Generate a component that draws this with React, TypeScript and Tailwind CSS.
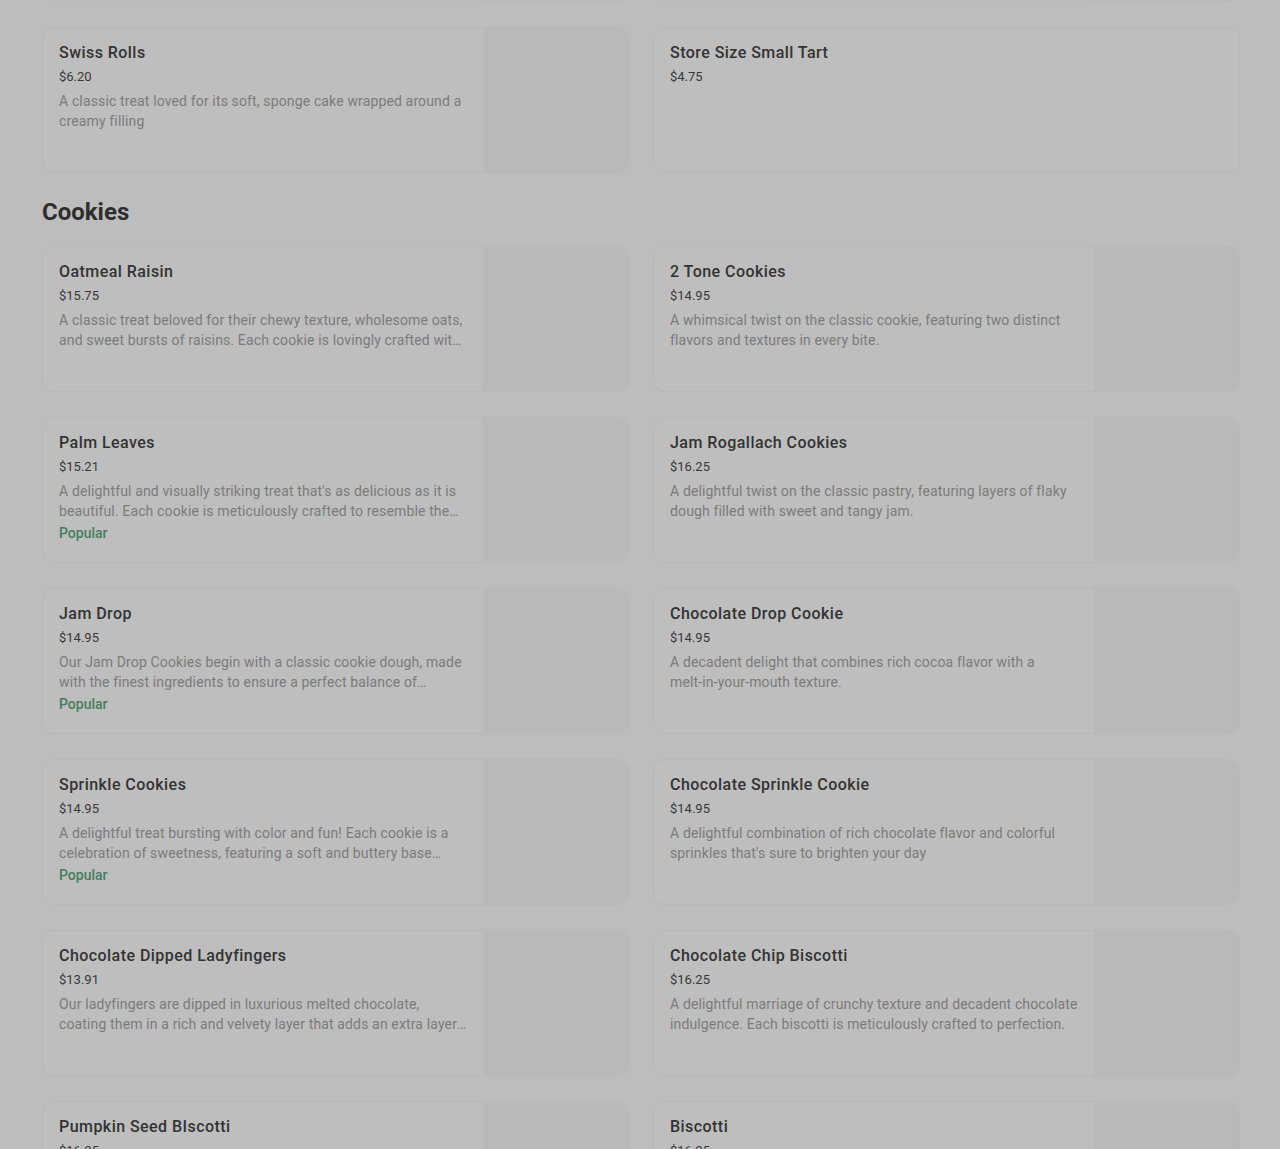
import React from 'react';

interface Item {
    name: string;
    price: string;
    description?: string;
    popular?: boolean;
    image?: boolean;
}

const previousRow: Item[] = [
    { name: 'Cannoli', price: '$5.95', description: 'Crisp pastry shells filled with sweet ricotta cream', image: true },
    { name: 'Fruit Tart', price: '$6.50', description: 'Buttery crust topped with custard and fresh fruit', image: true },
];

const pastries: Item[] = [
    { name: 'Swiss Rolls', price: '$6.20', description: 'A classic treat loved for its soft, sponge cake wrapped around a creamy filling', image: true },
    { name: 'Store Size Small Tart', price: '$4.75' },
];

const cookies: Item[] = [
    {
        name: 'Oatmeal Raisin',
        price: '$15.75',
        description: 'A classic treat beloved for their chewy texture, wholesome oats, and sweet bursts of raisins. Each cookie is lovingly crafted with care and baked to golden perfection.',
        image: true,
    },
    {
        name: '2 Tone Cookies',
        price: '$14.95',
        description: 'A whimsical twist on the classic cookie, featuring two distinct flavors and textures in every bite.',
        image: true,
    },
    {
        name: 'Palm Leaves',
        price: '$15.21',
        description: "A delightful and visually striking treat that's as delicious as it is beautiful. Each cookie is meticulously crafted to resemble the delicate leaves of a palm.",
        popular: true,
        image: true,
    },
    {
        name: 'Jam Rogallach Cookies',
        price: '$16.25',
        description: 'A delightful twist on the classic pastry, featuring layers of flaky dough filled with sweet and tangy jam.',
        image: true,
    },
    {
        name: 'Jam Drop',
        price: '$14.95',
        description: 'Our Jam Drop Cookies begin with a classic cookie dough, made with the finest ingredients to ensure a perfect balance of sweetness and texture.',
        popular: true,
        image: true,
    },
    {
        name: 'Chocolate Drop Cookie',
        price: '$14.95',
        description: 'A decadent delight that combines rich cocoa flavor with a melt‑in‑your‑mouth texture.',
        image: true,
    },
    {
        name: 'Sprinkle Cookies',
        price: '$14.95',
        description: 'A delightful treat bursting with color and fun! Each cookie is a celebration of sweetness, featuring a soft and buttery base topped with sprinkles.',
        popular: true,
        image: true,
    },
    {
        name: 'Chocolate Sprinkle Cookie',
        price: '$14.95',
        description: "A delightful combination of rich chocolate flavor and colorful sprinkles that's sure to brighten your day",
        image: true,
    },
    {
        name: 'Chocolate Dipped Ladyfingers',
        price: '$13.91',
        description: 'Our ladyfingers are dipped in luxurious melted chocolate, coating them in a rich and velvety layer that adds an extra layer of indulgence.',
        image: true,
    },
    {
        name: 'Chocolate Chip Biscotti',
        price: '$16.25',
        description: 'A delightful marriage of crunchy texture and decadent chocolate indulgence. Each biscotti is meticulously crafted to perfection.',
        image: true,
    },
    {
        name: 'Pumpkin Seed BIscotti',
        price: '$16.25',
        description: 'Crunchy twice-baked biscotti studded with toasted pumpkin seeds.',
        image: true,
    },
    {
        name: 'Biscotti',
        price: '$16.25',
        description: 'Traditional almond biscotti, perfect with coffee or tea.',
        image: true,
    },
];

function ItemCard({ item }: { item: Item }) {
    return (
        <div className="flex h-[146px] rounded-xl border border-[#b8b8b8] bg-[#bebebe] overflow-hidden">
            <div className="flex-1 min-w-0 pl-4 pr-4 pt-[15px]">
                <div className="text-[16px] leading-5 font-medium tracking-[0.45px] text-[#333333]">{item.name}</div>
                <div className="mt-1 text-[13px] leading-5 text-[#383838]">{item.price}</div>
                {item.description && (
                    <div className="mt-1 text-[14px] leading-5 tracking-[0.14px] text-[#7b7b7b] line-clamp-2 max-h-10 overflow-hidden">
                        {item.description}
                    </div>
                )}
                {item.popular && (
                    <div className="mt-[2px] text-[14px] leading-5 font-medium text-[#477c5e]">Popular</div>
                )}
            </div>
            {item.image && <div className="w-[145px] shrink-0 bg-[#b9b9b9]" />}
        </div>
    );
}

export default function App() {
    return (
        <div className="min-h-screen bg-[#bdbdbd] overflow-hidden" style={{ fontFamily: 'Roboto, "Liberation Sans", sans-serif' }}>
            <div className="pl-[42px] pr-[40px] -mt-[144px]">
                <div className="grid grid-cols-2 gap-x-6 gap-y-[25px]">
                    {[...previousRow, ...pastries].map((item) => (
                        <ItemCard key={item.name} item={item} />
                    ))}
                </div>

                {/* Cookies */}
                <h2 className="mt-[23px] mb-[18px] text-[24px] leading-8 font-bold text-[#2e2e2e]">Cookies</h2>
                <div className="grid grid-cols-2 gap-x-6 gap-y-[25px] pb-10">
                    {cookies.map((item) => (
                        <ItemCard key={item.name} item={item} />
                    ))}
                </div>
            </div>
        </div>
    );
}
